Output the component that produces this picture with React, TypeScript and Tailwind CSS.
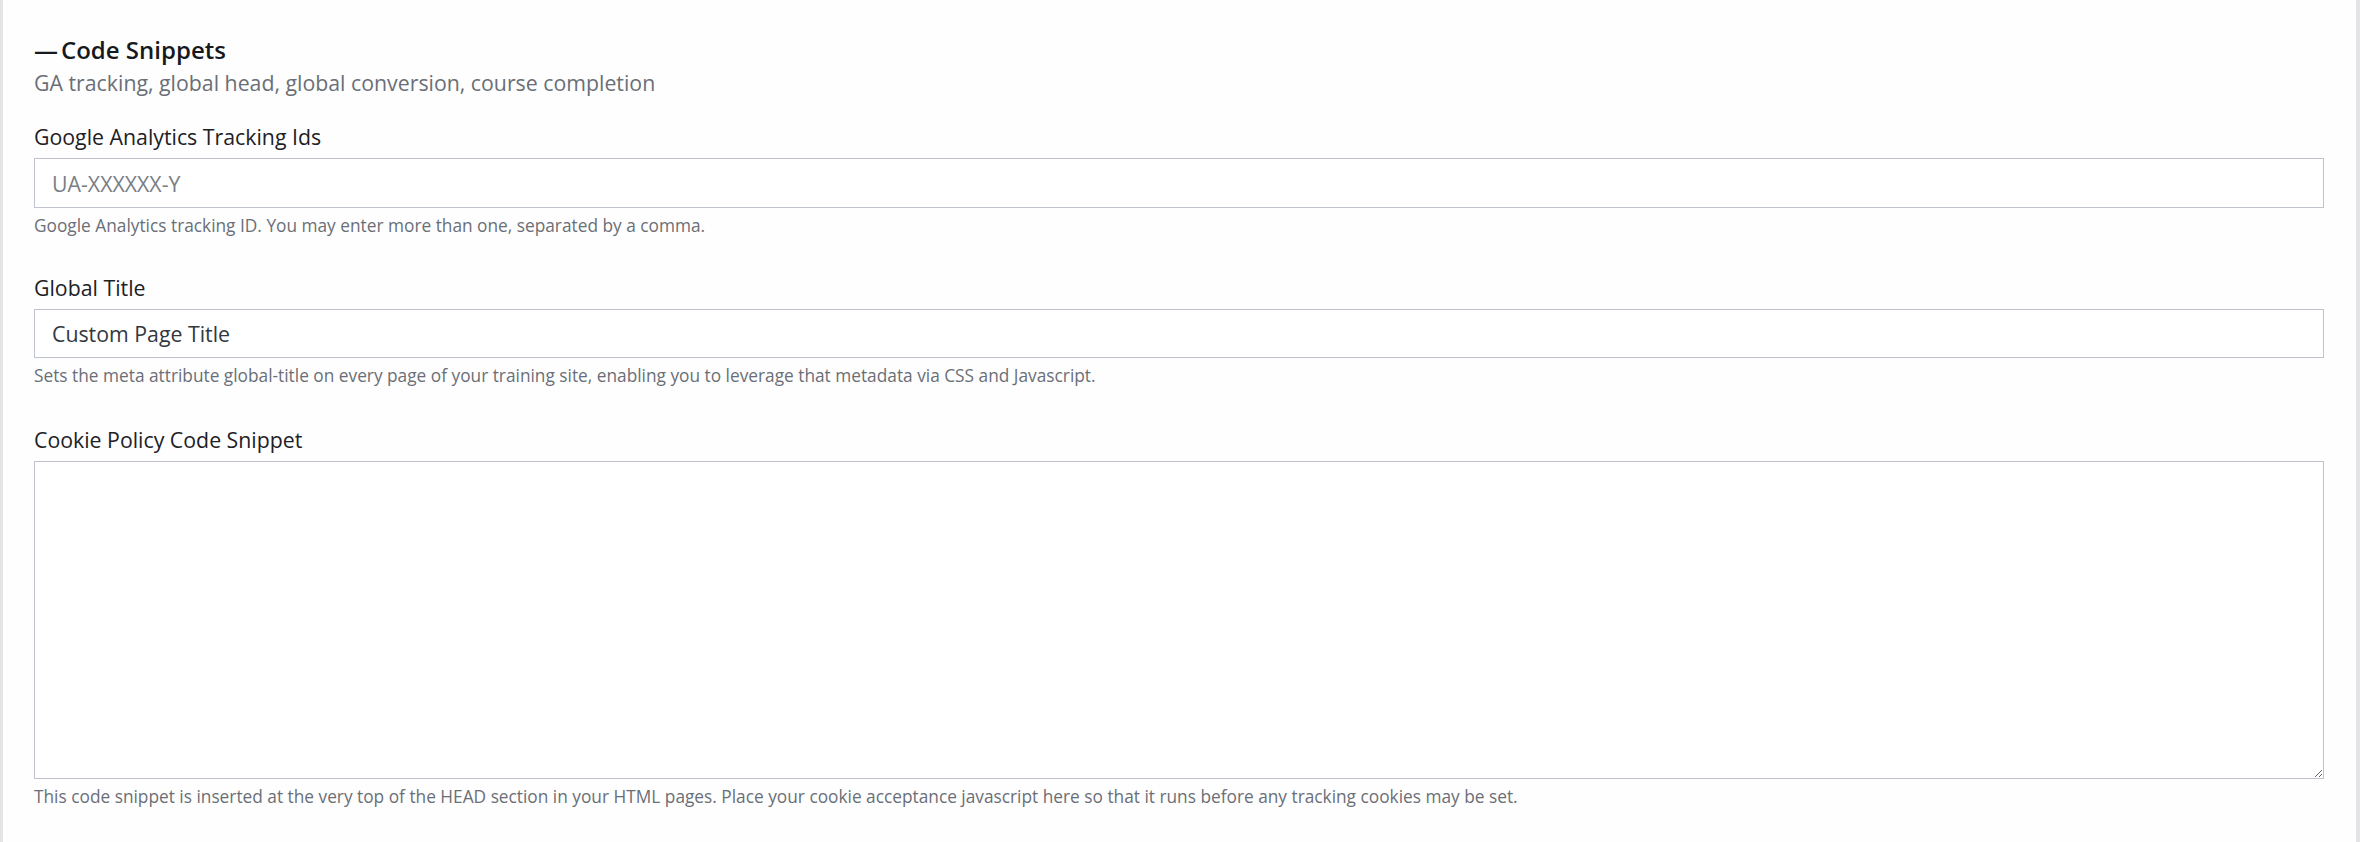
import React from "react";

const font = { fontFamily: '"Open Sans", "Noto Sans", Arial, sans-serif' };

function Field({
  label,
  help,
  children,
}: {
  label: string;
  help: string;
  children: React.ReactNode;
}) {
  return (
    <div className="flex flex-col">
      <label className="text-[21.3px] leading-[30px] text-[#1d2125]">{label}</label>
      <div className="mt-[6px]">{children}</div>
      <p className="mt-[6px] text-[17.3px] leading-[24px] text-[#6a6f77]">{help}</p>
    </div>
  );
}

export default function App() {
  return (
    <div
      className="min-h-[842px] w-full bg-[#fefefe] border-l-[3px] border-r-[4px] border-[#e4e4e6] pl-[31px] pr-[32px] pt-[35px]"
      style={font}
    >
      <h2 className="flex items-center text-[24px] leading-[30px] font-semibold text-[#16191d]">
        <span>—</span>
        <span className="ml-[3px]">Code Snippets</span>
      </h2>
      <p className="mt-[3px] text-[21.3px] leading-[30px] text-[#6a6f77]">
        GA tracking, global head, global conversion, course completion
      </p>

      <div className="mt-[24px] flex flex-col">
        <Field
          label="Google Analytics Tracking Ids"
          help="Google Analytics tracking ID. You may enter more than one, separated by a comma."
        >
          <input
            className="block h-[50px] w-full border-[1.5px] border-[#bfc3cf] bg-white px-[17px] text-[21.3px] text-[#4b5057] placeholder:text-[#7a7e85] outline-none"
            placeholder="UA-XXXXXX-Y"
          />
        </Field>
        <div className="mt-[35px]">
          <Field
            label="Global Title"
            help="Sets the meta attribute global-title on every page of your training site, enabling you to leverage that metadata via CSS and Javascript."
          >
            <input
              className="block h-[49px] w-full border-[1.5px] border-[#bfc3cf] bg-white px-[17px] text-[21.3px] text-[#33383e] outline-none"
              defaultValue="Custom Page Title"
            />
          </Field>
        </div>
        <div className="mt-[37px]">
          <Field
            label="Cookie Policy Code Snippet"
            help="This code snippet is inserted at the very top of the HEAD section in your HTML pages. Place your cookie acceptance javascript here so that it runs before any tracking cookies may be set."
          >
            <textarea className="block h-[318px] w-full border-[1.5px] border-[#bfc3cf] bg-white px-[17px] py-[10px] text-[21.3px] outline-none" />
          </Field>
        </div>
      </div>
    </div>
  );
}
